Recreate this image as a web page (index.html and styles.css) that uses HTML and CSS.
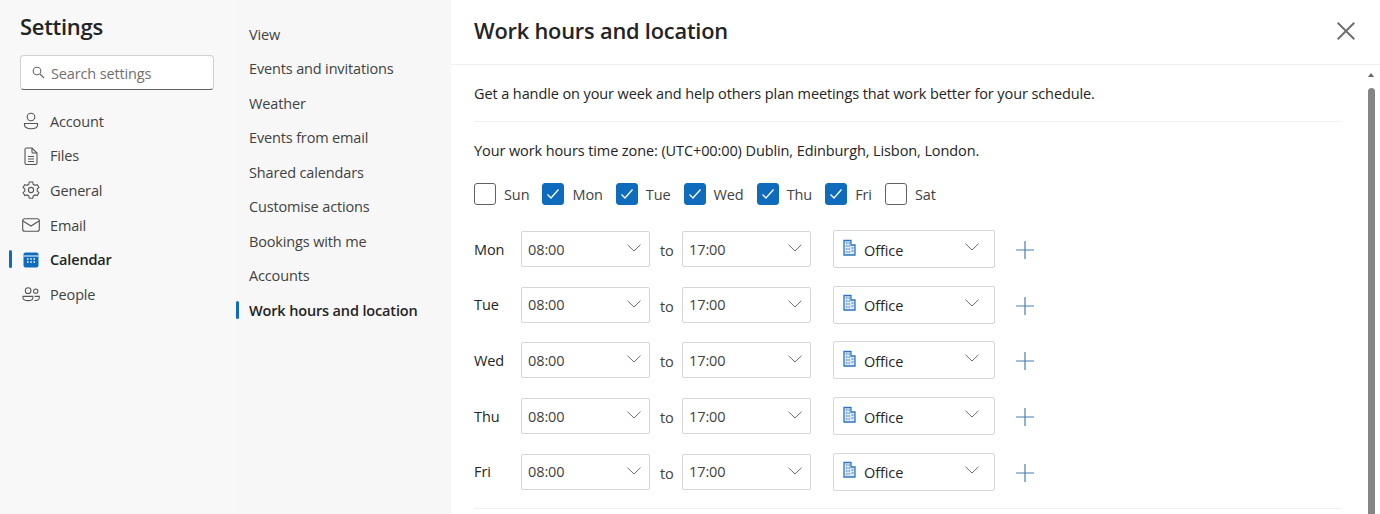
FILE: index.html
```html
<!DOCTYPE html>
<html lang="en">
<head>
    <meta charset="UTF-8">
    <title>Settings</title>
    <link rel="stylesheet" href="styles.css">
</head>
<body>
    <svg class="defs" width="0" height="0">
        <symbol id="chev" viewBox="0 0 14 8"><path d="M0.5 0.7 7 7 13.5 0.7" fill="none" stroke="#6f6d6b" stroke-width="1"/></symbol>
        <symbol id="tick" viewBox="0 0 14 12"><path d="M1.5 6.5 5 10 12.5 1.5" fill="none" stroke="#fff" stroke-width="1.3"/></symbol>
        <symbol id="office" viewBox="0 0 13 17"><path d="M1 16V1.5h7V6h4v10z" fill="#dbe8f6" stroke="#2f74c0" stroke-width="1.3"/><path d="M3 4h1.5M5.5 4H7M3 7h1.5M5.5 7H7M3 10h1.5M5.5 10H7M8.5 9H10.500M8.500 12H10.500M3 13h1.500M5.500 13H7" stroke="#2f74c0" stroke-width="1.200"/></symbol>
        <symbol id="plus" viewBox="0 0 18 18"><path d="M9 0v18M0 9h18" fill="none" stroke="#4a7fb5" stroke-width="1.200"/></symbol>
    </svg>

    <div class="app">
        <div class="sidebar">
            <h1>Settings</h1>
            <div class="search">
                <svg width="13" height="13" viewBox="0 0 13 13"><circle cx="5" cy="5" r="3.800" fill="none" stroke="#666" stroke-width="1.100"/><path d="M8 8l4 4" stroke="#666" stroke-width="1.100"/></svg>
                <span>Search settings</span>
            </div>
            <div class="menu">
                <div class="menu-item">
                    <svg width="18" height="18" viewBox="0 0 18 18" fill="none" stroke="#555" stroke-width="1.100"><circle cx="9" cy="5" r="3.800"/><path d="M2.500 11.500h13v1.500c0 2.500-3 3.800-6.500 3.800s-6.500-1.300-6.500-3.800z"/></svg>
                    <span>Account</span>
                </div>
                <div class="menu-item">
                    <svg width="18" height="18" viewBox="0 0 18 18" fill="none" stroke="#555" stroke-width="1.100"><path d="M3 2.500A1.500 1.500 0 0 1 4.500 1H10l5 5v10a1.500 1.500 0 0 1-1.500 1.500h-9A1.500 1.500 0 0 1 3 16zM10 1v4a1 1 0 0 0 1 1h4M6 9.500h6M6 12h6M6 14.500h6"/></svg>
                    <span>Files</span>
                </div>
                <div class="menu-item">
                    <svg width="18" height="18" viewBox="0 0 18 18" fill="none" stroke="#555" stroke-width="1.100"><circle cx="9" cy="9" r="2.600"/><path d="M7.300 1h3.400l.5 2.300 1.800 1 2.200-.7 1.700 2.900-1.700 1.600v2l1.700 1.600-1.700 2.900-2.200-.7-1.800 1-.5 2.300H7.300l-.5-2.300-1.800-1-2.200.7-1.700-2.900 1.700-1.600v-2L1.100 6.500l1.700-2.900 2.200.7 1.800-1z"/></svg>
                    <span>General</span>
                </div>
                <div class="menu-item">
                    <svg width="18" height="18" viewBox="0 0 18 18" fill="none" stroke="#555" stroke-width="1.100"><rect x="0.700" y="2.700" width="16.600" height="12.600" rx="2"/><path d="M1 5l8 5 8-5"/></svg>
                    <span>Email</span>
                </div>
                <div class="menu-item active">
                    <svg width="18" height="18" viewBox="0 0 18 18"><rect x="1.500" y="1.500" width="15" height="15" rx="2" fill="#0f6cbd"/><path d="M1.500 5h15" stroke="#fff" stroke-width="1"/><path d="M5 8h1.500M8.250 8h1.500M11.500 8H13M5 11h1.500M8.250 11h1.500M11.500 11H13" stroke="#fff" stroke-width="1.400"/></svg>
                    <span>Calendar</span>
                </div>
                <div class="menu-item">
                    <svg width="18" height="18" viewBox="0 0 19 18" fill="none" stroke="#555" stroke-width="1.100"><circle cx="6.500" cy="5.500" r="3"/><circle cx="14.500" cy="6" r="2.300"/><path d="M1 11.500h10.500v1.500c0 2-2.500 3-5.200 3S1 15 1 13zM13 15.800c3 .3 5.300-.8 5.300-2.800v-1.500h-5"/></svg>
                    <span>People</span>
                </div>
            </div>
        </div>

        <div class="subnav">
            <div class="subnav-item">View</div>
            <div class="subnav-item">Events and invitations</div>
            <div class="subnav-item">Weather</div>
            <div class="subnav-item">Events from email</div>
            <div class="subnav-item">Shared calendars</div>
            <div class="subnav-item">Customise actions</div>
            <div class="subnav-item">Bookings with me</div>
            <div class="subnav-item">Accounts</div>
            <div class="subnav-item active">Work hours and location</div>
        </div>

        <div class="main">
            <div class="main-header">
                <h2>Work hours and location</h2>
                <svg class="close" width="18" height="18" viewBox="0 0 18 18"><path d="M0.700 0.700l16.600 16.600M17.300 0.700L0.700 17.300" stroke="#6f6f6f" stroke-width="2" fill="none"/></svg>
            </div>
            <div class="main-body">
                <div class="content">
                    <p class="intro">Get a handle on your week and help others plan meetings that work better for your schedule.</p>
                    <p class="zone">Your work hours time zone: (UTC+00:00) Dublin, Edinburgh, Lisbon, London.</p>
                    <div class="days">
                        <label class="day"><span class="box"></span>Sun</label>
                        <label class="day"><span class="box on"><svg width="14" height="12"><use href="#tick"/></svg></span>Mon</label>
                        <label class="day"><span class="box on"><svg width="14" height="12"><use href="#tick"/></svg></span>Tue</label>
                        <label class="day"><span class="box on"><svg width="14" height="12"><use href="#tick"/></svg></span>Wed</label>
                        <label class="day"><span class="box on"><svg width="14" height="12"><use href="#tick"/></svg></span>Thu</label>
                        <label class="day"><span class="box on"><svg width="14" height="12"><use href="#tick"/></svg></span>Fri</label>
                        <label class="day"><span class="box"></span>Sat</label>
                    </div>
                    <div class="rows">
                        <div class="row">
                            <span class="row-day">Mon</span>
                            <div class="select">08:00<svg class="chev" width="14" height="8"><use href="#chev"/></svg></div>
                            <span class="to">to</span>
                            <div class="select">17:00<svg class="chev" width="14" height="8"><use href="#chev"/></svg></div>
                            <div class="select place"><svg width="13" height="17"><use href="#office"/></svg><span>Office</span><svg class="chev" width="14" height="8"><use href="#chev"/></svg></div>
                            <svg class="plus" width="18" height="18"><use href="#plus"/></svg>
                        </div>
                        <div class="row">
                            <span class="row-day">Tue</span>
                            <div class="select">08:00<svg class="chev" width="14" height="8"><use href="#chev"/></svg></div>
                            <span class="to">to</span>
                            <div class="select">17:00<svg class="chev" width="14" height="8"><use href="#chev"/></svg></div>
                            <div class="select place"><svg width="13" height="17"><use href="#office"/></svg><span>Office</span><svg class="chev" width="14" height="8"><use href="#chev"/></svg></div>
                            <svg class="plus" width="18" height="18"><use href="#plus"/></svg>
                        </div>
                        <div class="row">
                            <span class="row-day">Wed</span>
                            <div class="select">08:00<svg class="chev" width="14" height="8"><use href="#chev"/></svg></div>
                            <span class="to">to</span>
                            <div class="select">17:00<svg class="chev" width="14" height="8"><use href="#chev"/></svg></div>
                            <div class="select place"><svg width="13" height="17"><use href="#office"/></svg><span>Office</span><svg class="chev" width="14" height="8"><use href="#chev"/></svg></div>
                            <svg class="plus" width="18" height="18"><use href="#plus"/></svg>
                        </div>
                        <div class="row">
                            <span class="row-day">Thu</span>
                            <div class="select">08:00<svg class="chev" width="14" height="8"><use href="#chev"/></svg></div>
                            <span class="to">to</span>
                            <div class="select">17:00<svg class="chev" width="14" height="8"><use href="#chev"/></svg></div>
                            <div class="select place"><svg width="13" height="17"><use href="#office"/></svg><span>Office</span><svg class="chev" width="14" height="8"><use href="#chev"/></svg></div>
                            <svg class="plus" width="18" height="18"><use href="#plus"/></svg>
                        </div>
                        <div class="row">
                            <span class="row-day">Fri</span>
                            <div class="select">08:00<svg class="chev" width="14" height="8"><use href="#chev"/></svg></div>
                            <span class="to">to</span>
                            <div class="select">17:00<svg class="chev" width="14" height="8"><use href="#chev"/></svg></div>
                            <div class="select place"><svg width="13" height="17"><use href="#office"/></svg><span>Office</span><svg class="chev" width="14" height="8"><use href="#chev"/></svg></div>
                            <svg class="plus" width="18" height="18"><use href="#plus"/></svg>
                        </div>
                    </div>
                </div>
                <div class="scrollbar">
                    <span class="scroll-arrow"></span>
                    <span class="scroll-thumb"></span>
                </div>
            </div>
        </div>
    </div>
</body>
</html>
```

FILE: styles.css
```css
html, body {
    margin: 0;
    height: 100%;
    overflow: hidden;
}
body {
    font-family: "Open Sans", "Noto Sans", sans-serif;
    font-size: 14.5px;
    color: #242424;
    letter-spacing: -0.15px;
}
.defs {
    display: none;
}
.app {
    display: flex;
    height: 514px;
}
.sidebar {
    width: 236px;
    box-sizing: border-box;
    padding: 0 22px 0 0;
    background-color: #f8f8f8;
}
.sidebar h1 {
    font-size: 22px;
    font-weight: 600;
    line-height: 30px;
    margin: 11px 0 14px 20px;
    letter-spacing: -0.3px;
}
.search {
    display: flex;
    align-items: center;
    gap: 6px;
    height: 33px;
    margin-left: 20px;
    padding-left: 11px;
    background-color: #fff;
    border: 1px solid #d1d1d1;
    border-bottom-color: #616161;
    border-radius: 4px;
    color: #707070;
}
.search span {
    padding-top: 2px;
}
.menu {
    margin-top: 14px;
}
.menu-item {
    position: relative;
    display: flex;
    align-items: center;
    gap: 10px;
    height: 34.6px;
    padding-left: 22px;
    color: #424242;
}
.menu-item.active {
    font-weight: 600;
    color: #242424;
}
.menu-item.active::before,
.subnav-item.active::before {
    content: "";
    position: absolute;
    top: 8px;
    width: 3px;
    height: 18px;
    border-radius: 2px;
    background-color: #0f6cbd;
}
.menu-item.active::before {
    left: 9px;
}
.subnav {
    width: 215px;
    padding-top: 17px;
    background-color: #f7f7f7;
}
.subnav-item {
    position: relative;
    display: flex;
    align-items: center;
    height: 34.5px;
    padding-left: 13px;
    color: #424242;
}
.subnav-item.active {
    font-weight: 600;
    color: #242424;
}
.subnav-item.active::before {
    left: 0;
}
.main {
    flex: 1;
    display: flex;
    flex-direction: column;
    min-width: 0;
    background-color: #fff;
}
.main-header {
    display: flex;
    align-items: center;
    justify-content: space-between;
    height: 64px;
    box-sizing: content-box;
    padding: 0 25px 0 23px;
    border-bottom: 1px solid #f0f0f0;
    flex-shrink: 0;
}
.main-header h2 {
    margin: 0 0 3px;
    font-size: 21.8px;
    font-weight: 600;
    letter-spacing: -0.2px;
}
.close {
    margin-bottom: 3px;
}
.main-body {
    flex: 1;
    display: flex;
    min-height: 0;
}
.content {
    width: 867px;
    margin-left: 23px;
    color: #242424;
    letter-spacing: -0.1px;
}
.intro {
    margin: 0;
    height: 57px;
    box-sizing: border-box;
    padding-top: 18px;
    line-height: 22px;
    border-bottom: 1px solid #f0f0f0;
}
.zone {
    margin: 18px 0 0;
    line-height: 22px;
}
.days {
    display: flex;
    align-items: center;
    gap: 13px;
    margin-top: 21px;
    height: 22px;
}
.day {
    display: flex;
    align-items: center;
    gap: 8px;
    color: #424242;
}
.box {
    display: flex;
    align-items: center;
    justify-content: center;
    width: 20px;
    height: 20px;
    border: 1px solid #616161;
    border-radius: 3px;
}
.box.on {
    background-color: #0f6cbd;
    border-color: #0f6cbd;
}
.rows {
    margin-top: 25px;
    padding-bottom: 17px;
    border-bottom: 1px solid #f0f0f0;
}
.row {
    display: flex;
    align-items: center;
    height: 38px;
    margin-bottom: 17.7px;
}
.row:last-child {
    margin-bottom: 0;
}
.row-day {
    width: 47px;
}
.select {
    position: relative;
    display: flex;
    align-items: center;
    box-sizing: border-box;
    width: 129px;
    height: 36px;
    padding-left: 6px;
    border: 1px solid #d6d6d6;
    border-radius: 2px;
    background-color: #fff;
    color: #424242;
}
.select .chev {
    position: absolute;
    top: 12px;
    right: 8px;
}
.to {
    flex: 0 0 32px;
    box-sizing: border-box;
    padding: 3px 0 0 10px;
    color: #424242;
}
.place {
    width: 162px;
    height: 38px;
    margin-left: 22px;
    gap: 8px;
    padding-left: 9px;
    color: #242424;
}
.place span {
    padding-top: 2px;
}
.place .chev {
    right: 15px;
}
.place > svg:first-child {
    margin-top: -4px;
}
.plus {
    margin: 2px 0 0 21px;
}
.scrollbar {
    position: relative;
    flex: 1;
}
.scroll-arrow {
    position: absolute;
    top: 8px;
    left: 27px;
    width: 0;
    height: 0;
    border-left: 3px solid transparent;
    border-right: 3px solid transparent;
    border-bottom: 4px solid #666;
}
.scroll-thumb {
    position: absolute;
    top: 23px;
    bottom: 0;
    left: 27px;
    width: 7px;
    border-radius: 4px 4px 0 0;
    background-color: #858585;
}
```
